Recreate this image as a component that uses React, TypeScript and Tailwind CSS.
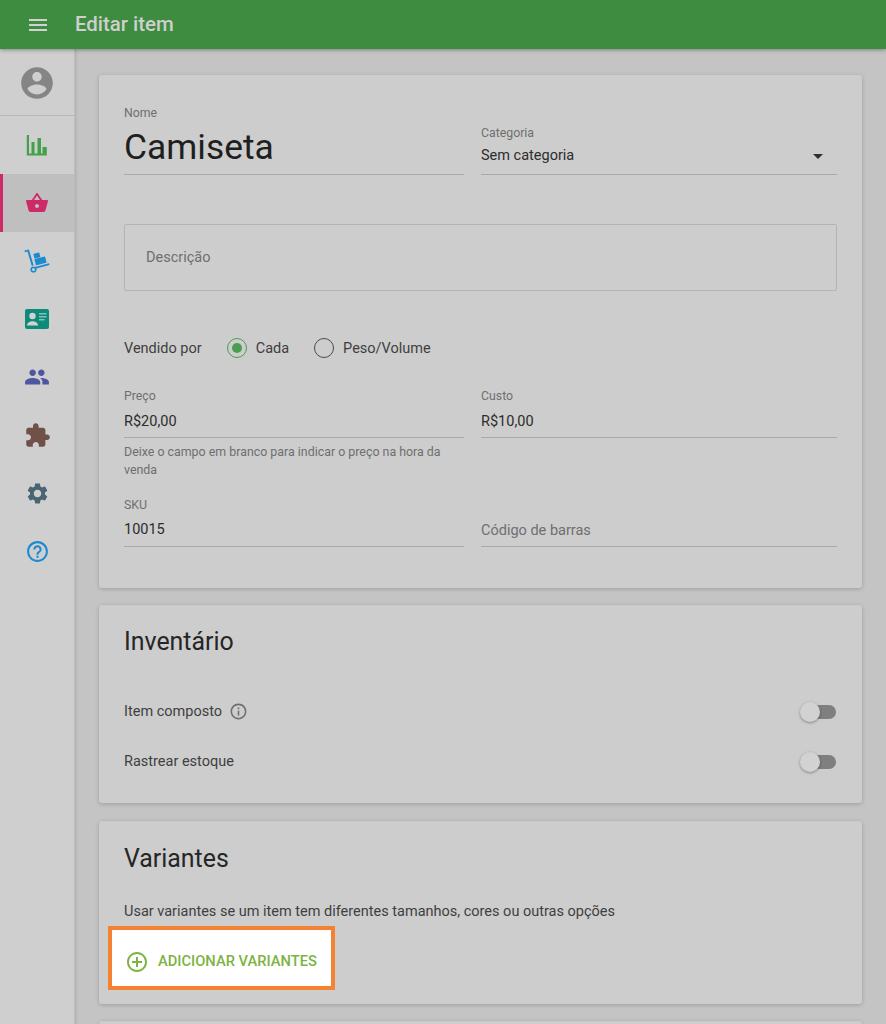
import React from "react";

const Underline = "border-b border-[#a9a9a9]";

function Icon({ d, color, size = 24 }: { d: string; color: string; size?: number }) {
  return (
    <svg width={size} height={size} viewBox="0 0 24 24" fill={color}>
      <path d={d} />
    </svg>
  );
}

function SideRow({ children, active }: { children: React.ReactNode; active?: boolean }) {
  return (
    <div className={`h-[58px] flex items-center justify-center ${active ? "bg-[#bfbfbf] border-l-[3px] border-[#cf2a68] pr-[3px]" : ""}`}>
      {children}
    </div>
  );
}

function Toggle() {
  return (
    <div className="relative w-[36px] h-[20px] mr-[1px] flex items-center justify-end">
      <div className="w-[24px] h-[14px] rounded-full bg-[#7f7f7f]" />
      <div className="absolute left-0 top-0 w-[20px] h-[20px] rounded-full bg-[#d2d2d2] shadow-[0_1px_3px_rgba(0,0,0,0.35)]" />
    </div>
  );
}

function Radio({ checked, label }: { checked?: boolean; label: string }) {
  return (
    <div className="flex items-center gap-[9px]">
      <div className={`w-[20px] h-[20px] rounded-full border flex items-center justify-center ${checked ? "border-[#4a9e50] border-[1.5px]" : "border-[#4a4a4a]"}`}>
        {checked && <div className="w-[10px] h-[10px] rounded-full bg-[#4a9e50]" />}
      </div>
      <span className="text-[14.5px] pt-[2px] text-[#3f3f3f]">{label}</span>
    </div>
  );
}

const cardCls = "bg-[#cdcdcd] rounded-[3px] shadow-[0_1px_4px_rgba(0,0,0,0.2)] px-[25px]";

export default function App() {
  return (
    <div className="h-[1024px] w-[886px] overflow-hidden flex flex-col bg-[#c4c4c4] font-['Roboto',sans-serif]">
      <header className="relative z-10 h-[49px] shrink-0 bg-[#3d8c40] shadow-[0_1px_4px_rgba(0,0,0,0.35)] flex items-center">
        <div className="w-[75px] flex justify-center">
          <Icon color="#d2d2d2" d="M3 18h18v-2H3v2zm0-5h18v-2H3v2zm0-7v2h18V6H3z" />
        </div>
        <span className="text-[20.4px] font-medium text-[#cfcfcf] leading-none">Editar item</span>
      </header>
      <div className="flex flex-1 min-h-0">
        <aside className="w-[75px] shrink-0 bg-[#cfcfcf] border-r border-[#bdbdbd] shadow-[1px_0_3px_rgba(0,0,0,0.12)]">
          <div className="h-[67px] pt-[2px] flex items-center justify-center border-b border-[#b8b8b8]">
            <Icon size={38} color="#858585" d="M12 2C6.48 2 2 6.48 2 12s4.48 10 10 10 10-4.48 10-10S17.52 2 12 2zm0 3c1.66 0 3 1.34 3 3s-1.34 3-3 3-3-1.34-3-3 1.34-3 3-3zm0 14.2c-2.5 0-4.71-1.28-6-3.22.03-1.99 4-3.08 6-3.08 1.99 0 5.97 1.09 6 3.08-1.29 1.94-3.5 3.22-6 3.22z" />
          </div>
          <SideRow>
            <svg width="24" height="24" viewBox="0 0 24 24" fill="#45a04a">
              <path d="M1.800 2H4v18.500h2.500V9h3v11.500h3V5H16v15.500h1.500V14h4.300v8.500H1.800z" />
            </svg>
          </SideRow>
          <SideRow active>
            <Icon size={24} color="#cf2a68" d="M17.21 9l-4.38-6.56c-.19-.28-.51-.42-.83-.42-.32 0-.64.14-.83.43L6.79 9H2c-.55 0-1 .45-1 1 0 .09.01.18.04.27l2.54 9.27c.23.84 1 1.46 1.92 1.46h13c.92 0 1.69-.62 1.93-1.46l2.54-9.27L23 10c0-.55-.45-1-1-1h-4.79zM9 9l3-4.4L15 9H9zm3 8c-1.1 0-2-.9-2-2s.9-2 2-2 2 .9 2 2-.9 2-2 2z" />
          </SideRow>
          <SideRow>
            <svg width="26" height="26" viewBox="0 0 26 26" fill="#1c8ad0">
              <path d="M.500 2.500l4.400-1 4.700 15.800-1.800.6L3.500 3.600.9 4.200z" />
              <rect x="10" y="5" width="6" height="5" rx=".5" transform="rotate(-14 13 8)" />
              <rect x="11" y="10" width="11" height="6.500" rx=".5" transform="rotate(-14 15 13)" />
              <path d="M10 19.200l15-3.900.5 1.700-15 3.900z" />
              <circle cx="9.500" cy="21.500" r="2.300" fill="none" stroke="#1c8ad0" strokeWidth="1.600" />
            </svg>
          </SideRow>
          <SideRow>
            <svg width="26" height="22" viewBox="0 0 26 22">
              <rect x="1" y="1" width="24" height="20" rx="2" fill="#0d8a79" />
              <circle cx="8.500" cy="8" r="3.200" fill="#d2d2d2" />
              <path d="M3 17.500c0-3 3.500-4.200 5.500-4.200s5.500 1.200 5.500 4.200z" fill="#d2d2d2" />
              <path d="M15 5h7.500v1.500H15zM15 8h7.500v1.500H15zM15 11h5.500v1.500H15z" fill="#86c0b6" />
            </svg>
          </SideRow>
          <SideRow>
            <Icon size={26} color="#4d56a0" d="M16 11c1.660 0 2.990-1.340 2.990-3S17.660 5 16 5c-1.660 0-3 1.340-3 3s1.340 3 3 3zm-8 0c1.660 0 2.990-1.340 2.990-3S9.660 5 8 5C6.340 5 5 6.340 5 8s1.340 3 3 3zm0 2c-2.330 0-7 1.170-7 3.500V19h14v-2.500c0-2.330-4.670-3.500-7-3.500zm8 0c-.29 0-.62.02-.97.05 1.160.84 1.970 1.970 1.970 3.450V19h6v-2.500c0-2.330-4.670-3.500-7-3.500z" />
          </SideRow>
          <SideRow>
            <Icon size={27} color="#6f5148" d="M20.500 11H19V7c0-1.100-.9-2-2-2h-4V3.500C13 2.120 11.880 1 10.500 1S8 2.120 8 3.500V5H4c-1.100 0-1.990.9-1.990 2v3.800H3.500c1.490 0 2.700 1.210 2.700 2.700s-1.210 2.700-2.700 2.700H2V20c0 1.100.9 2 2 2h3.800v-1.500c0-1.490 1.210-2.700 2.700-2.700 1.490 0 2.700 1.210 2.700 2.700V22H17c1.100 0 2-.9 2-2v-4h1.500c1.380 0 2.500-1.120 2.500-2.500S21.880 11 20.500 11z" />
          </SideRow>
          <SideRow>
            <Icon size={25} color="#4a6472" d="M19.140 12.940c.04-.3.060-.61.060-.94 0-.32-.02-.64-.07-.94l2.030-1.580c.18-.14.230-.41.120-.61l-1.920-3.320c-.12-.22-.37-.29-.59-.22l-2.390.96c-.5-.38-1.030-.7-1.620-.94l-.36-2.540c-.04-.24-.24-.41-.48-.41h-3.840c-.24 0-.43.17-.47.41l-.36 2.540c-.59.24-1.130.57-1.620.94l-2.390-.96c-.22-.08-.47 0-.59.22L2.740 8.870c-.12.21-.08.47.12.61l2.030 1.580c-.05.3-.09.63-.09.94s.02.64.07.94l-2.030 1.580c-.18.14-.23.41-.12.61l1.920 3.320c.12.22.37.29.59.22l2.390-.96c.5.38 1.030.7 1.620.94l.36 2.540c.05.24.24.41.48.41h3.840c.24 0 .44-.17.47-.41l.36-2.540c.59-.24 1.130-.56 1.620-.94l2.390.96c.22.08.47 0 .59-.22l1.920-3.320c.12-.22.07-.47-.12-.61l-2.010-1.580zM12 15.600c-1.980 0-3.600-1.620-3.600-3.600s1.620-3.600 3.600-3.600 3.600 1.620 3.600 3.600-1.620 3.600-3.600 3.600z" />
          </SideRow>
          <SideRow>
            <Icon size={25} color="#1c8ad0" d="M11 18h2v-2h-2v2zm1-16C6.480 2 2 6.480 2 12s4.480 10 10 10 10-4.480 10-10S17.520 2 12 2zm0 18c-4.410 0-8-3.590-8-8s3.590-8 8-8 8 3.590 8 8-3.590 8-8 8zm0-14c-2.210 0-4 1.790-4 4h2c0-1.100.9-2 2-2s2 .9 2 2c0 2-3 1.750-3 5h2c0-2.250 3-2.500 3-5 0-2.210-1.790-4-4-4z" />
          </SideRow>
        </aside>
        <main className="flex-1 pl-[24px] pr-[24px] pt-[26px] flex flex-col gap-[17px]">
          <section className={`${cardCls} h-[513px] shrink-0 pt-[31px]`}>
            <div className="grid grid-cols-[340px_356px] gap-x-[17px]">
              <div className={`${Underline} h-[69px]`}>
                <div className="text-[12.3px] leading-[14px] text-[#6f6f6f]">Nome</div>
                <div className="text-[35.4px] leading-[40px] mt-[7px] text-[#1f1f1f]">Camiseta</div>
              </div>
              <div className={`${Underline} h-[69px] pt-[20px]`}>
                <div className="text-[12.3px] leading-[14px] text-[#6f6f6f]">Categoria</div>
                <div className="flex items-center justify-between mt-[8px] pr-[14px]">
                  <span className="text-[14.5px] leading-[16px] text-[#2c2c2c]">Sem categoria</span>
                  <div className="w-0 h-0 border-x-[5px] border-x-transparent border-t-[5px] border-t-[#2f2f2f]" />
                </div>
              </div>
            </div>
            <div className="mt-[49px] h-[67px] border border-[#b4b4b4] rounded-[2px] flex items-center pl-[21px] text-[14.5px] text-[#6f6f6f]">
              Descrição
            </div>
            <div className="mt-[46px] flex items-center h-[22px] text-[14.5px] text-[#3f3f3f]">
              <span className="mr-[25px] pt-[2px]">Vendido por</span>
              <Radio checked label="Cada" />
              <div className="w-[25px]" />
              <Radio label="Peso/Volume" />
            </div>
            <div className="mt-[30px] grid grid-cols-[340px_356px] gap-x-[17px]">
              <div>
                <div className={`${Underline} h-[49px]`}>
                  <div className="text-[12.3px] leading-[14px] text-[#6f6f6f]">Preço</div>
                  <div className="text-[14.5px] leading-[16px] mt-[11px] text-[#2c2c2c]">R$20,00</div>
                </div>
                <div className="mt-[5px] text-[12.4px] leading-[18px] text-[#6f6f6f]">
                  Deixe o campo em branco para indicar o preço na hora da venda
                </div>
              </div>
              <div className={`${Underline} h-[49px]`}>
                <div className="text-[12.3px] leading-[14px] text-[#6f6f6f]">Custo</div>
                <div className="text-[14.5px] leading-[16px] mt-[11px] text-[#2c2c2c]">R$10,00</div>
              </div>
              <div className={`${Underline} h-[49px] mt-[19px]`}>
                <div className="text-[12.3px] leading-[14px] text-[#6f6f6f]">SKU</div>
                <div className="text-[14.5px] leading-[16px] mt-[10px] text-[#2c2c2c]">10015</div>
              </div>
              <div className={`${Underline} h-[49px] mt-[19px] flex items-end pb-[7px]`}>
                <span className="text-[14.5px] leading-[16px] text-[#6f6f6f]">Código de barras</span>
              </div>
            </div>
          </section>
          <section className={`${cardCls} h-[198px] shrink-0 pt-[23px]`}>
            <h2 className="text-[24.9px] leading-[28px] text-[#262626]">Inventário</h2>
            <div className="mt-[44px] flex items-center justify-between h-[24px]">
              <div className="flex items-center gap-[7px] text-[14.5px] text-[#3f3f3f]">
                <span>Item composto</span>
                <svg className="mb-[2px]" width="19" height="19" viewBox="0 0 24 24" fill="#6f6f6f">
                  <path d="M11 7h2v2h-2zm0 4h2v6h-2zm1-9C6.480 2 2 6.480 2 12s4.480 10 10 10 10-4.480 10-10S17.520 2 12 2zm0 18c-4.410 0-8-3.590-8-8s3.590-8 8-8 8 3.590 8 8-3.590 8-8 8z" />
                </svg>
              </div>
              <Toggle />
            </div>
            <div className="mt-[26px] flex items-center justify-between h-[24px]">
              <span className="text-[14.5px] text-[#3f3f3f]">Rastrear estoque</span>
              <Toggle />
            </div>
          </section>
          <section className={`${cardCls} h-[183px] shrink-0 pt-[24px] mt-[1px]`}>
            <h2 className="text-[24.9px] leading-[28px] text-[#262626]">Variantes</h2>
            <p className="mt-[31px] text-[14.5px] leading-[16px] text-[#3f3f3f]">
              Usar variantes se um item tem diferentes tamanhos, cores ou outras opções
            </p>
            <div className="mt-[6px] -ml-[16px] w-[227px] h-[64px] bg-white border-[4px] border-[#f58233] flex items-center pl-[13px] pt-[8px] gap-[9px]">
              <svg width="24" height="24" viewBox="0 0 24 24" fill="#7cb342">
                <path d="M13 7h-2v4H7v2h4v4h2v-4h4v-2h-4V7zm-1-5C6.490 2 2 6.490 2 12s4.490 10 10 10 10-4.490 10-10S17.510 2 12 2zm0 18c-4.410 0-8-3.590-8-8s3.590-8 8-8 8 3.590 8 8-3.590 8-8 8z" />
              </svg>
              <span className="text-[14.7px] font-medium text-[#7cb342] whitespace-nowrap pb-[2px]">ADICIONAR VARIANTES</span>
            </div>
          </section>
          <section className={`${cardCls} h-[100px] shrink-0`} />
        </main>
      </div>
    </div>
  );
}
